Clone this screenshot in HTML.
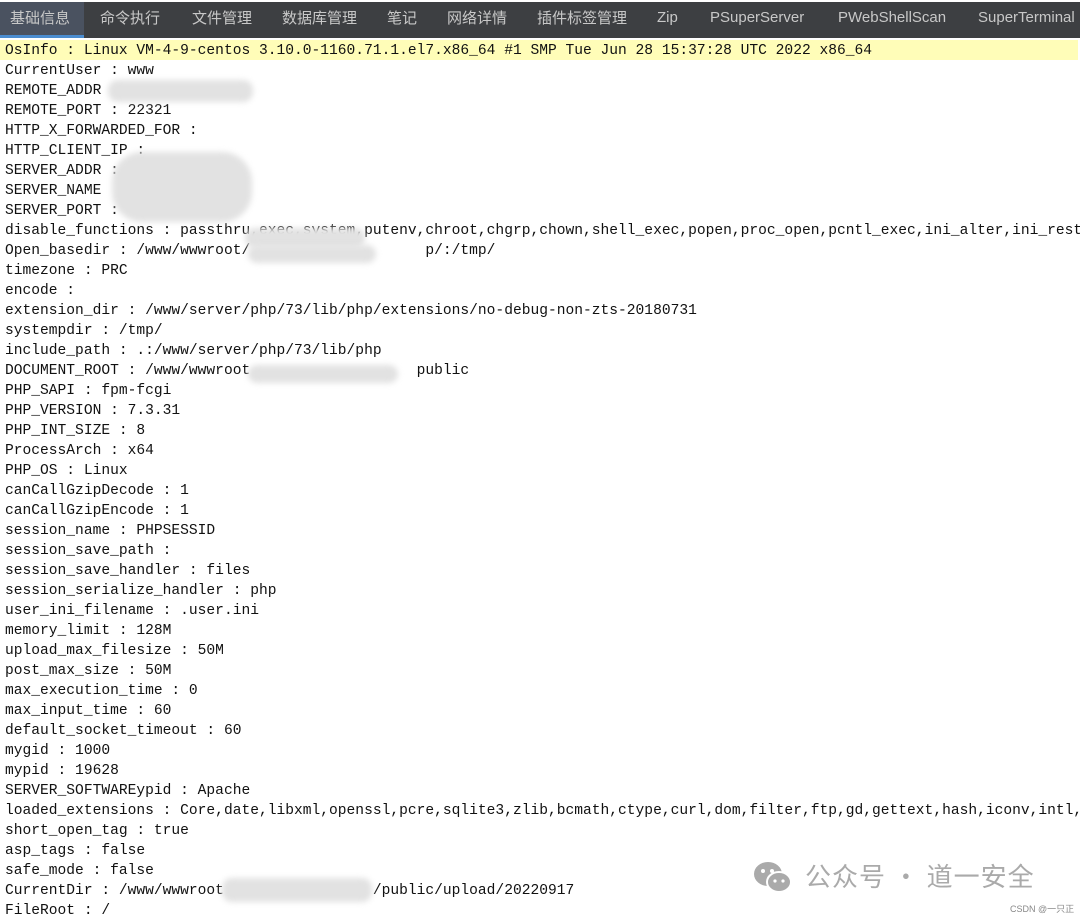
<!DOCTYPE html>
<html><head><meta charset="utf-8"><style>
body{margin:0;width:1080px;height:919px;overflow:hidden;background:#fff;position:relative;font-family:"Liberation Mono",monospace}
.bar{position:absolute;left:0;top:2px;width:1080px;height:36px;background:#3d3f42}
.tab{position:absolute;height:20px;line-height:20px;color:#c8c8c8;font:15px "Liberation Sans","Noto Sans CJK SC",sans-serif;white-space:nowrap}
.c{top:7px}.e{top:9px}
.act{position:absolute;left:0;top:2px;width:84px;height:36px;background:#4a5260;border-bottom:3px solid #4a8cd0;box-sizing:border-box}
.l{position:absolute;left:5px;font-size:14.6px;line-height:20px;color:#111;white-space:pre}
.y{position:absolute;left:0;top:40px;width:1078px;height:20px;background:#fffdb8}
.b{position:absolute;background:#e2e2e2;border-radius:10px;filter:blur(3px)}
.wm{position:absolute;left:805px;top:857px;font:26px "Noto Sans CJK SC",sans-serif;color:#aaa;letter-spacing:1px}
.cs{position:absolute;left:1010px;top:902px;font:9px "Liberation Sans","Noto Sans CJK SC",sans-serif;color:#888}
</style></head><body>
<div class="bar"></div><div class="act"></div>
<div class="tab c" style="left:10px">基础信息</div>
<div class="tab c" style="left:100px">命令执行</div>
<div class="tab c" style="left:192px">文件管理</div>
<div class="tab c" style="left:282px">数据库管理</div>
<div class="tab c" style="left:387px">笔记</div>
<div class="tab c" style="left:447px">网络详情</div>
<div class="tab c" style="left:537px">插件标签管理</div>
<div class="tab e" style="left:657px">Zip</div>
<div class="tab e" style="left:710px">PSuperServer</div>
<div class="tab e" style="left:838px">PWebShellScan</div>
<div class="tab e" style="left:978px">SuperTerminal</div>
<div class="y"></div>
<div class="l" style="top:41px">OsInfo : Linux VM-4-9-centos 3.10.0-1160.71.1.el7.x86_64 #1 SMP Tue Jun 28 15:37:28 UTC 2022 x86_64
CurrentUser : www
REMOTE_ADDR
REMOTE_PORT : 22321
HTTP_X_FORWARDED_FOR :
HTTP_CLIENT_IP :
SERVER_ADDR :
SERVER_NAME
SERVER_PORT :
disable_functions : passthru,exec,system,putenv,chroot,chgrp,chown,shell_exec,popen,proc_open,pcntl_exec,ini_alter,ini_restore
Open_basedir : /www/wwwroot/                    p/:/tmp/
timezone : PRC
encode :
extension_dir : /www/server/php/73/lib/php/extensions/no-debug-non-zts-20180731
systempdir : /tmp/
include_path : .:/www/server/php/73/lib/php
DOCUMENT_ROOT : /www/wwwroot                   public
PHP_SAPI : fpm-fcgi
PHP_VERSION : 7.3.31
PHP_INT_SIZE : 8
ProcessArch : x64
PHP_OS : Linux
canCallGzipDecode : 1
canCallGzipEncode : 1
session_name : PHPSESSID
session_save_path :
session_save_handler : files
session_serialize_handler : php
user_ini_filename : .user.ini
memory_limit : 128M
upload_max_filesize : 50M
post_max_size : 50M
max_execution_time : 0
max_input_time : 60
default_socket_timeout : 60
mygid : 1000
mypid : 19628
SERVER_SOFTWAREypid : Apache
loaded_extensions : Core,date,libxml,openssl,pcre,sqlite3,zlib,bcmath,ctype,curl,dom,filter,ftp,gd,gettext,hash,iconv,intl,json
short_open_tag : true
asp_tags : false
safe_mode : false
CurrentDir : /www/wwwroot                 /public/upload/20220917
FileRoot : /</div>
<div class="b" style="left:108px;top:80px;width:145px;height:22px"></div>
<div class="b" style="left:112px;top:152px;width:140px;height:70px;border-radius:30px"></div>
<div class="b" style="left:245px;top:228px;width:120px;height:20px"></div>
<div class="b" style="left:248px;top:245px;width:128px;height:18px"></div>
<div class="b" style="left:248px;top:365px;width:150px;height:18px"></div>
<div class="b" style="left:222px;top:878px;width:150px;height:24px"></div>
<div class="wm"><svg width="40" height="34" viewBox="0 0 40 34" style="position:absolute;left:-52px;top:4px"><ellipse cx="15" cy="13" rx="14" ry="12" fill="#aaa"/><ellipse cx="26" cy="21" rx="12" ry="10" fill="#aaa" stroke="#fff" stroke-width="2"/><circle cx="10" cy="10" r="2" fill="#fff"/><circle cx="19" cy="10" r="2" fill="#fff"/><circle cx="22" cy="20" r="1.6" fill="#fff"/><circle cx="30" cy="20" r="1.6" fill="#fff"/></svg>公众号 · 道一安全</div>
<div class="cs">CSDN @一只正</div>
</body></html>
